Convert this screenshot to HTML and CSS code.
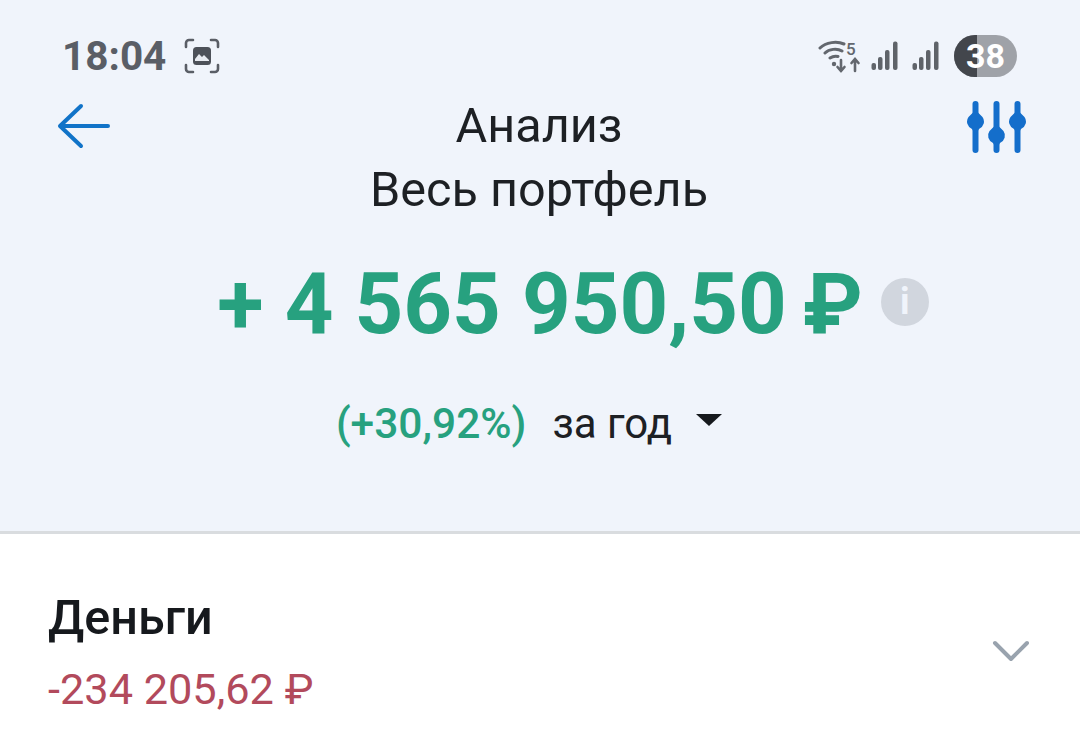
FILE: index.html
```html
<!DOCTYPE html>
<html lang="ru">
<head>
    <meta charset="utf-8">
    <title>Анализ</title>
    <link rel="stylesheet" href="styles.css">
</head>
<body>
<div class="top">
    <div class="status-bar">
        <div class="status-left">
            <span class="time">18:04</span>
            <svg class="shot-icon" width="38" height="38" viewBox="0 0 38 38" fill="none">
                <path d="M3 10V6a3 3 0 0 1 3-3h4M28 3h4a3 3 0 0 1 3 3v4M35 28v4a3 3 0 0 1-3 3h-4M10 35H6a3 3 0 0 1-3-3v-4" stroke="#5a5e66" stroke-width="2.6" stroke-linecap="round"/>
                <rect x="10" y="10" width="18" height="18" rx="3.5" fill="#4d5159"/>
                <path d="M12 22l4-5 3 3 2-2 5 5v1H12z" fill="#e8ebf1"/>
            </svg>
        </div>
        <div class="status-right">
            <svg class="wifi-icon" width="44" height="34" viewBox="0 0 44 34" fill="none">
                <path d="M2 9C8 3 19 2 26 5M7 14c4-4 12-5 17-2M12 19c3-2 6-2 8-1.500" stroke="#63676e" stroke-width="3" stroke-linecap="round"/>
                <circle cx="16" cy="25" r="2.2" fill="#63676e"/>
                <path d="M23 21v11M19.500 28l3.500 4 3.500-4M37 32V20M33.500 24l3.500-4 3.500 4" stroke="#63676e" stroke-width="2.6" stroke-linecap="round"/>
                <text x="28" y="16" class="wifi-five">5</text>
            </svg>
            <svg class="signal-icon" width="28" height="30" viewBox="0 0 28 30">
                <rect x="0.5" y="22" width="4.5" height="7" rx="2"/>
                <rect x="7" y="16" width="4.5" height="13" rx="2"/>
                <rect x="14" y="9" width="4.5" height="20" rx="2"/>
                <rect x="22" y="0.5" width="4.5" height="28.5" rx="2"/>
            </svg>
            <svg class="signal-icon" width="28" height="30" viewBox="0 0 28 30">
                <rect x="0.5" y="22" width="4.5" height="7" rx="2"/>
                <rect x="7" y="16" width="4.5" height="13" rx="2"/>
                <rect x="14" y="9" width="4.5" height="20" rx="2"/>
                <rect x="22" y="0.5" width="4.5" height="28.5" rx="2"/>
            </svg>
            <div class="battery"><span class="battery-level"></span><span class="battery-text">38</span></div>
        </div>
    </div>

    <div class="nav">
        <svg class="back-icon" width="54" height="46" viewBox="0 0 54 46" fill="none">
            <path d="M51 23H4M24 3L3 23l21 20" stroke="#1173c8" stroke-width="4" stroke-linecap="round" stroke-linejoin="round"/>
        </svg>
        <div class="nav-title">
            <div>Анализ</div>
            <div>Весь портфель</div>
        </div>
        <svg class="filter-icon" width="62" height="56" viewBox="0 0 62 56" fill="#146ecb">
            <rect x="5.5" y="1" width="6" height="52" rx="3"/>
            <rect x="26.5" y="1" width="6" height="52" rx="3"/>
            <rect x="47.500" y="1" width="6" height="52" rx="3"/>
            <path d="M8.500 10l7 7a8 8 0 0 1-3.500 12l-3.500 6-3.500-6a8 8 0 0 1-3.500-12z"/>
            <path d="M29.500 24l7 7a8 8 0 0 1-3.500 12l-3.500 6-3.500-6a8 8 0 0 1-3.500-12z"/>
            <path d="M50.500 10l7 7a8 8 0 0 1-3.500 12l-3.500 6-3.500-6a8 8 0 0 1-3.500-12z"/>
        </svg>
    </div>

    <div class="amount-row">
        <span class="amount">+ 4 565 950,50<span class="rub">₽</span></span>
        <span class="info-icon">i</span>
    </div>

    <div class="period-row">
        <span class="percent">(+30,92%)</span>
        <span class="period">за год</span>
        <span class="caret"></span>
    </div>
</div>

<div class="money-row">
    <div>
        <div class="money-title">Деньги</div>
        <div class="money-value">-234 205,62 ₽</div>
    </div>
    <svg class="chevron" width="38" height="24" viewBox="0 0 38 24" fill="none">
        <path d="M3 4l16 16L35 4" stroke="#99a3ae" stroke-width="4" stroke-linecap="round" stroke-linejoin="round"/>
    </svg>
</div>
</body>
</html>
```

FILE: styles.css
```css
html, body {
    height: 100%;
}
body {
    margin: 0;
    background-color: #ffffff;
    font-family: 'Roboto', 'Liberation Sans', sans-serif;
    color: #16191d;
    overflow: hidden;
}
.top {
    background-color: #f0f4fb;
    height: 499px;
    border-bottom: 3px solid #d9dcdf;
    padding-top: 32px;
}
.status-bar {
    display: flex;
    justify-content: space-between;
    align-items: center;
    height: 48px;
    padding: 0 63px 0 62px;
}
.status-left {
    display: flex;
    align-items: center;
    gap: 17px;
}
.time {
    font-size: 40.5px;
    font-weight: 700;
    color: #5a5e66;
}
.status-right {
    display: flex;
    align-items: center;
}
.wifi-icon {
    margin-right: 9px;
}
.wifi-five {
    font-family: 'Roboto', sans-serif;
    font-size: 17px;
    font-weight: 500;
    fill: #63676e;
}
.signal-icon {
    fill: #5f6369;
    margin-right: 13px;
}
.battery {
    position: relative;
    width: 63px;
    height: 42px;
    border-radius: 21px;
    background-color: #9fa2a8;
    overflow: hidden;
    margin-left: 1px;
    display: flex;
    align-items: center;
    justify-content: center;
}
.battery-level {
    position: absolute;
    left: 0;
    top: 0;
    bottom: 0;
    width: 23px;
    background-color: #43464c;
}
.battery-text {
    position: relative;
    font-size: 34px;
    font-weight: 700;
    color: #ffffff;
}
.nav {
    display: flex;
    justify-content: space-between;
    align-items: flex-start;
    padding: 0 51px 0 58px;
    margin-top: 14px;
}
.nav-title {
    text-align: center;
    font-size: 48.6px;
    line-height: 64px;
    color: #1d2024;
}
.back-icon {
    margin-top: 9px;
    margin-left: -1px;
}
.filter-icon {
    margin-top: 6px;
}
.amount-row {
    display: flex;
    justify-content: center;
    align-items: center;
    gap: 18px;
    margin-top: 32px;
    padding-left: 66px;
}
.amount {
    font-size: 85px;
    font-weight: 700;
    color: #27a17f;
    line-height: 100px;
}
.rub {
    margin-left: 16px;
}
.info-icon {
    width: 48px;
    height: 48px;
    border-radius: 50%;
    background-color: #d1d6de;
    color: #f0f4fb;
    font-size: 36px;
    font-weight: 700;
    text-align: center;
    line-height: 48px;
    margin-bottom: 4px;
}
.period-row {
    display: flex;
    justify-content: center;
    align-items: center;
    margin-top: 45px;
    font-size: 42px;
    line-height: 50px;
    padding-right: 22px;
}
.percent {
    color: #27a17f;
    font-size: 42.5px;
    font-weight: 500;
    margin-right: 26px;
}
.period {
    color: #1d2024;
    margin-right: 24px;
}
.caret {
    width: 0;
    height: 0;
    border-left: 13px solid transparent;
    border-right: 13px solid transparent;
    border-top: 12px solid #16191d;
    margin-bottom: 8px;
}
.money-row {
    display: flex;
    justify-content: space-between;
    align-items: center;
    padding: 54px 50px 0 48px;
}
.money-title {
    font-size: 48.5px;
    font-weight: 500;
    line-height: 60px;
    color: #16191d;
}
.money-value {
    font-size: 43.3px;
    line-height: 50px;
    margin-top: 17px;
    color: #b24a5c;
}
.chevron {
    margin-bottom: 2px;
}
```
